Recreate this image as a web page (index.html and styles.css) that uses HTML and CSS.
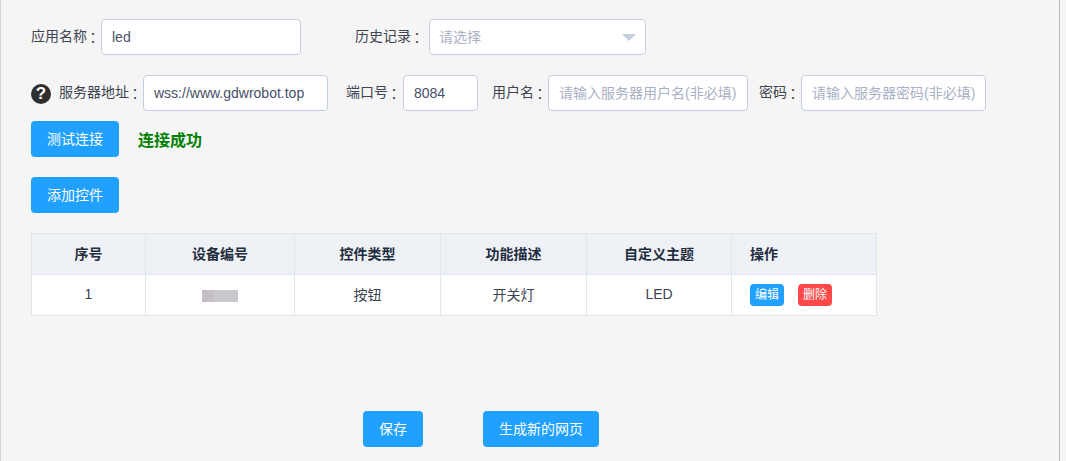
FILE: index.html
```html
<!DOCTYPE html>
<html lang="zh">
<head>
<meta charset="utf-8">
<title>应用配置</title>
<link rel="stylesheet" href="styles.css">
</head>
<body>
<main class="panel">
  <div class="row row-app">
    <label class="label w70">应用名称<span class="colon" lang="zh-Hant">：</span></label>
    <input class="input w200" value="led">
    <label class="label w75 history-label">历史记录<span class="colon" lang="zh-Hant">：</span></label>
    <div class="select"><span class="select-text">请选择</span><span class="arrow"></span></div>
  </div>
  <div class="row row-server">
    <span class="help">?</span>
    <label class="label w84">服务器地址<span class="colon" lang="zh-Hant">：</span></label>
    <input class="input w185" value="wss://www.gdwrobot.top">
    <label class="label w56 port-label">端口号<span class="colon" lang="zh-Hant">：</span></label>
    <input class="input w75" value="8084">
    <label class="label w56 user-label">用户名<span class="colon" lang="zh-Hant">：</span></label>
    <input class="input w200" placeholder="请输入服务器用户名(非必填)">
    <label class="label w42 pass-label">密码<span class="colon" lang="zh-Hant">：</span></label>
    <input class="input w185" placeholder="请输入服务器密码(非必填)">
  </div>
  <div class="row-test">
    <button class="btn w88">测试连接</button>
    <span class="status">连接成功</span>
  </div>
  <div class="row-add"><button class="btn w88">添加控件</button></div>
  <table class="table">
    <colgroup>
      <col class="c1"><col class="c2"><col class="c3"><col class="c4"><col class="c5"><col class="c6">
    </colgroup>
    <thead>
      <tr><th>序号</th><th>设备编号</th><th>控件类型</th><th>功能描述</th><th>自定义主题</th><th class="left">操作</th></tr>
    </thead>
    <tbody>
      <tr>
        <td>1</td>
        <td><span class="blur"><i class="b1"></i><i class="b2"></i></span></td>
        <td>按钮</td>
        <td>开关灯</td>
        <td>LED</td>
        <td class="left action"><span class="tag blue">编辑</span><span class="tag red">删除</span></td>
      </tr>
    </tbody>
  </table>
  <div class="footer">
    <button class="btn w60">保存</button>
    <button class="btn w116">生成新的网页</button>
  </div>
</main>
</body>
</html>
```
FILE: styles.css
```css
* { box-sizing: border-box; }
html, body { margin: 0; height: 461px; overflow: hidden; background: #f5f5f5; }
body {
  font-family: "Liberation Sans", "Noto Sans CJK SC", sans-serif;
  font-size: 14px;
  color: #495060;
}
.panel {
  width: 1060px;
  height: 461px;
  padding: 19px 0 0 30px;
  border-left: 1px solid #d4d4d4;
  border-right: 1px solid #bdbdbd;
}
.row { display: flex; align-items: center; height: 36px; }
.row-server { margin-top: 20px; }
.row-test { display: flex; align-items: center; margin-top: 10px; height: 36px; }
.row-add { margin-top: 20px; height: 36px; }
.label { display: block; flex: none; white-space: nowrap; color: #3f4450; line-height: 36px; padding-bottom: 2px; }
.colon { font-family: "Noto Sans CJK TC", sans-serif; line-height: 1; vertical-align: -2px; margin-left: -1px; }
.w70 { width: 70px; } .w75 { width: 75px; } .w84 { width: 84px; } .w56 { width: 56px; } .w42 { width: 42px; }
.history-label { margin-left: 53px; padding-left: 1px; }
.port-label { margin-left: 18px; width: 57px; }
.user-label { margin-left: 14px; }
.pass-label { margin-left: 11px; }
.input, .select {
  flex: none;
  height: 36px;
  border: 1px solid #c4cfdd;
  border-radius: 4px;
  background: #fff;
  padding: 0 10px;
  font: inherit;
  color: #475069;
  outline: none;
}
.input::placeholder { color: #a9b1c4; opacity: 1; }
.w200 { width: 200px; } .w185 { width: 185px; } .w75 { width: 75px; }
.select { width: 217px; display: flex; align-items: center; justify-content: space-between; padding: 0 9px 2px 9px; }
.select-text { color: #a9b1c4; }
.arrow { width: 0; height: 0; margin-top: 2px; border-style: solid; border-width: 7px 7px 0; border-color: #c4cfdd transparent transparent; }
.help {
  flex: none;
  width: 20px; height: 20px;
  margin: 2px 8px 0 0;
  border-radius: 50%;
  background: #2e2e2e;
  color: #fff;
  font-size: 17px;
  font-weight: 700;
  line-height: 20px;
  text-align: center;
}
.btn {
  display: block;
  height: 36px;
  padding: 0 0 2px;
  border: 0;
  border-radius: 4px;
  background: #20a0ff;
  color: #fff;
  font: inherit;
  font-size: 14px;
}
.w88 { width: 88px; } .w60 { width: 60px; } .w116 { width: 116px; }
.status { margin-left: 19px; color: #008000; font-size: 16px; font-weight: 700; font-family: "Liberation Serif", "Noto Sans CJK SC", serif; }
.table {
  margin-top: 20px;
  width: 845px;
  border-collapse: collapse;
  table-layout: fixed;
  background: #fff;
  color: #3c4350;
}
.c1 { width: 114px; } .c2 { width: 149px; } .c3 { width: 146px; } .c4 { width: 146px; } .c5 { width: 145px; } .c6 { width: 145px; }
.table th, .table td {
  height: 41px;
  padding: 0 0 2px;
  border: 1px solid #e0e6ed;
  text-align: center;
  font-size: 14px;
}
.table th { background: #eef1f6; font-weight: 700; color: #1f2d3d; }
.table .left { text-align: left; padding-left: 18px; }
.table .action { padding-bottom: 0; }
.blur { display: inline-flex; vertical-align: middle; height: 12px; margin-top: 2px; }
.blur i { display: block; height: 12px; }
.b1 { width: 12px; background: #c5bfc5; }
.b2 { width: 24px; background: #c8c8ce; }
.tag {
  display: inline-block;
  width: 34px; height: 22px;
  border-radius: 4px;
  color: #fff;
  font-size: 12px;
  line-height: 22px;
  text-align: center;
  vertical-align: middle;
}
.blue { background: #20a0ff; }
.red { background: #ff4949; margin-left: 14px; }
.footer { display: flex; gap: 60px; margin-top: 95px; padding-left: 332px; }
```
